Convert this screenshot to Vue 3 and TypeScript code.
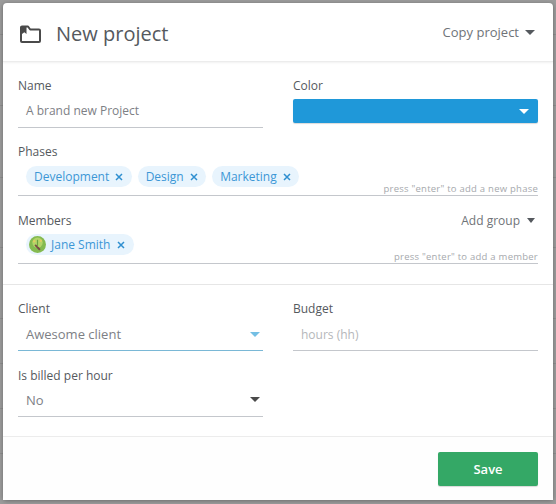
<script setup lang="ts">
const phases: string[] = ['Development', 'Design', 'Marketing']
// rows of the page behind the dialog, only their edges show
const backdropRows: number[] = [34, 105, 177, 247, 318, 363, 408, 453]
</script>

<template>
  <div class="page">
    <div v-for="row in backdropRows" :key="row" class="backdrop-row" :style="{ top: row + 'px' }"></div>
    <div class="modal">
      <header class="modal-header">
        <div class="title-group">
          <svg class="folder-icon" width="21" height="18" viewBox="0 0 21 18">
            <path d="M2 1.500h6l2.200 3H19a1 1 0 0 1 1 1V16a1 1 0 0 1-1 1H2a1 1 0 0 1-1-1V2.500a1 1 0 0 1 1-1z" fill="none" stroke="#4a4a4a" stroke-width="2" stroke-linejoin="round" />
            <path d="M2 1.500h4.500V9L4.300 7.200 2 9z" fill="#4a4a4a" />
          </svg>
          <h1 class="title">New project</h1>
        </div>
        <div class="menu-link copy-link">Copy project <span class="caret"></span></div>
      </header>

      <section class="modal-body">
        <div class="two-col top-row">
          <div class="field">
            <label class="field-label">Name</label>
            <div class="input-line name-line">A brand new Project</div>
          </div>
          <div class="field">
            <label class="field-label">Color</label>
            <div class="color-select"><span class="caret caret-white"></span></div>
          </div>
        </div>

        <div class="field tags-field phases">
          <label class="field-label">Phases</label>
          <div class="tags-line">
            <span v-for="phase in phases" :key="phase" class="chip">
              {{ phase }}
              <svg class="chip-x" width="8" height="8" viewBox="0 0 8 8"><path d="M1 1l6 6M7 1L1 7" stroke="#2f8fd0" stroke-width="1.500" /></svg>
            </span>
            <span class="hint">press "enter" to add a new phase</span>
          </div>
        </div>

        <div class="field tags-field members">
          <div class="label-row">
            <label class="field-label">Members</label>
            <div class="menu-link add-group">Add group <span class="caret caret-small"></span></div>
          </div>
          <div class="tags-line member-line">
            <span class="chip member-chip">
              <svg class="avatar" width="17" height="17" viewBox="0 0 18 18">
                <circle cx="9" cy="9" r="9" fill="#84ba50" />
                <circle cx="9" cy="7" r="5.500" fill="#b2d468" />
                <circle cx="5.500" cy="5.500" r="1.300" fill="#e0cd62" />
                <circle cx="12.500" cy="5" r="1.300" fill="#e0cd62" />
                <path d="M7 10l4 4" stroke="#7b4a46" stroke-width="2" stroke-linecap="round" />
                <path d="M9 4v7" stroke="#6ba040" stroke-width="1.200" />
              </svg>
              Jane Smith
              <svg class="chip-x member-x" width="8" height="8" viewBox="0 0 8 8"><path d="M1 1l6 6M7 1L1 7" stroke="#2f8fd0" stroke-width="1.500" /></svg>
            </span>
            <span class="hint">press "enter" to add a member</span>
          </div>
        </div>

        <div class="divider"></div>

        <div class="two-col client-row">
          <div class="field">
            <label class="field-label">Client</label>
            <div class="input-line select-line active-line">
              <span>Awesome client</span>
              <span class="caret caret-blue"></span>
            </div>
          </div>
          <div class="field">
            <label class="field-label">Budget</label>
            <div class="input-line select-line budget-line"><span class="placeholder">hours (hh)</span></div>
          </div>
        </div>

        <div class="two-col billed-row">
          <div class="field">
            <label class="field-label">Is billed per hour</label>
            <div class="input-line select-line billed-line">
              <span>No</span>
              <span class="caret caret-dark"></span>
            </div>
          </div>
        </div>
      </section>

      <footer class="modal-footer">
        <button class="save-button" type="button">Save</button>
      </footer>
    </div>
  </div>
</template>

<style>
html, body {
  margin: 0;
  background: #9b9b9b;
}
</style>

<style scoped>
.page {
  position: relative;
  width: 556px;
  height: 504px;
  box-sizing: border-box;
  padding: 3px;
  overflow: hidden;
  background-color: #9b9b9b;
  font-family: "Open Sans", sans-serif;
}
.backdrop-row {
  position: absolute;
  left: 0;
  right: 0;
  height: 1px;
  background: #8d8d8d;
}
.modal {
  position: relative;
  width: 550px;
  height: 497px;
  display: flex;
  flex-direction: column;
  background: #fff;
  border-radius: 4px;
  box-shadow: 0 1px 4px rgba(0, 0, 0, 0.3);
}
.modal-header {
  height: 59px;
  flex: none;
  box-sizing: border-box;
  display: flex;
  justify-content: space-between;
  align-items: center;
  padding: 3px 18px 0 16px;
  border-bottom: 1px solid #ececec;
  box-shadow: 0 1px 2px rgba(0, 0, 0, 0.06);
}
.title-group {
  display: flex;
  align-items: center;
  gap: 15px;
}
.folder-icon {
  display: block;
  margin: 1px 0 0 1px;
}
.title {
  margin: 0;
  font-size: 20px;
  line-height: 28px;
  font-weight: 400;
  color: #55595e;
}
.menu-link {
  display: flex;
  align-items: center;
  gap: 6px;
  font-size: 13px;
  color: #6f7378;
}
.copy-link {
  margin-top: -3px;
}
.caret {
  display: inline-block;
  width: 0;
  height: 0;
  border-left: 5px solid transparent;
  border-right: 5px solid transparent;
  border-top: 5px solid #55595e;
}
.caret-small {
  border-left-width: 4.500px;
  border-right-width: 4.500px;
}
.caret-white {
  border-top-color: #fff;
}
.caret-blue {
  border-top-color: #74bfe4;
}
.caret-dark {
  border-top-color: #4a4a4a;
}
.modal-body {
  flex: 1;
  box-sizing: border-box;
  padding: 0 15px;
}
.two-col {
  display: grid;
  grid-template-columns: 245px 245px;
  column-gap: 30px;
}
.top-row {
  padding-top: 15px;
}
.field {
  min-width: 0;
}
.field-label {
  display: block;
  font-size: 12px;
  line-height: 18px;
  color: #55595e;
}
.input-line {
  box-sizing: border-box;
  border-bottom: 1px solid #c4c7cc;
  padding: 0 0 0 8px;
  font-size: 13px;
  color: #7d8085;
}
.name-line {
  height: 33px;
  line-height: 32px;
  font-size: 12px;
}
.color-select {
  height: 24px;
  margin-top: 4px;
  display: flex;
  align-items: center;
  justify-content: flex-end;
  padding-right: 9px;
  background: #1f98d9;
  border-radius: 2px;
  box-shadow: 0 1px 1px rgba(0, 0, 0, 0.15);
}
.tags-field {
  width: 520px;
}
.phases {
  margin-top: 15px;
}
.members {
  margin-top: 16px;
}
.label-row {
  display: flex;
  justify-content: space-between;
  align-items: center;
}
.add-group {
  font-size: 12px;
  margin-top: -1px;
  margin-right: 3px;
  gap: 7px;
}
.tags-line {
  position: relative;
  height: 35px;
  box-sizing: border-box;
  padding: 5px 0 0 8px;
  display: flex;
  align-items: flex-start;
  gap: 6px;
  border-bottom: 1px solid #c4c7cc;
}
.member-line {
  height: 34px;
  padding-top: 4px;
}
.chip {
  display: inline-flex;
  align-items: center;
  gap: 6px;
  height: 21px;
  box-sizing: border-box;
  padding: 0 8.400px 0 8px;
  border-radius: 11px;
  background: #e8f4fd;
  color: #3c97d6;
  font-size: 12px;
  white-space: nowrap;
}
.member-chip {
  padding-left: 3px;
  gap: 5px;
}
.avatar {
  display: block;
  flex: none;
}
.chip-x {
  display: block;
  flex: none;
}
.member-x {
  margin-left: 2px;
}
.hint {
  position: absolute;
  right: 0;
  bottom: 0;
  font-size: 9.500px;
  line-height: 13px;
  color: #a6a9ad;
  letter-spacing: 0.24px;
}
.divider {
  height: 1px;
  margin: 20px -15px 0;
  background: #e6e6e6;
}
.client-row {
  padding-top: 15px;
}
.select-line {
  height: 33px;
  display: flex;
  align-items: center;
  justify-content: space-between;
  padding-right: 3px;
}
.active-line {
  border-bottom-color: #7ab8d6;
}
.budget-line {
  font-size: 12px;
}
.placeholder {
  color: #b5b7ba;
}
.billed-row {
  margin-top: 16px;
}
.billed-line {
  height: 32px;
  padding-bottom: 2px;
}
.modal-footer {
  height: 64px;
  flex: none;
  box-sizing: border-box;
  display: flex;
  justify-content: flex-end;
  padding: 15px 15px 0 0;
  border-top: 1px solid #ececec;
  background: #fefefe;
}
.save-button {
  width: 100px;
  height: 34px;
  border: none;
  border-radius: 2px;
  background: #34a866;
  color: #fff;
  font-family: inherit;
  font-size: 13px;
  font-weight: 600;
  box-shadow: 0 1px 1px rgba(0, 0, 0, 0.15);
}
</style>
